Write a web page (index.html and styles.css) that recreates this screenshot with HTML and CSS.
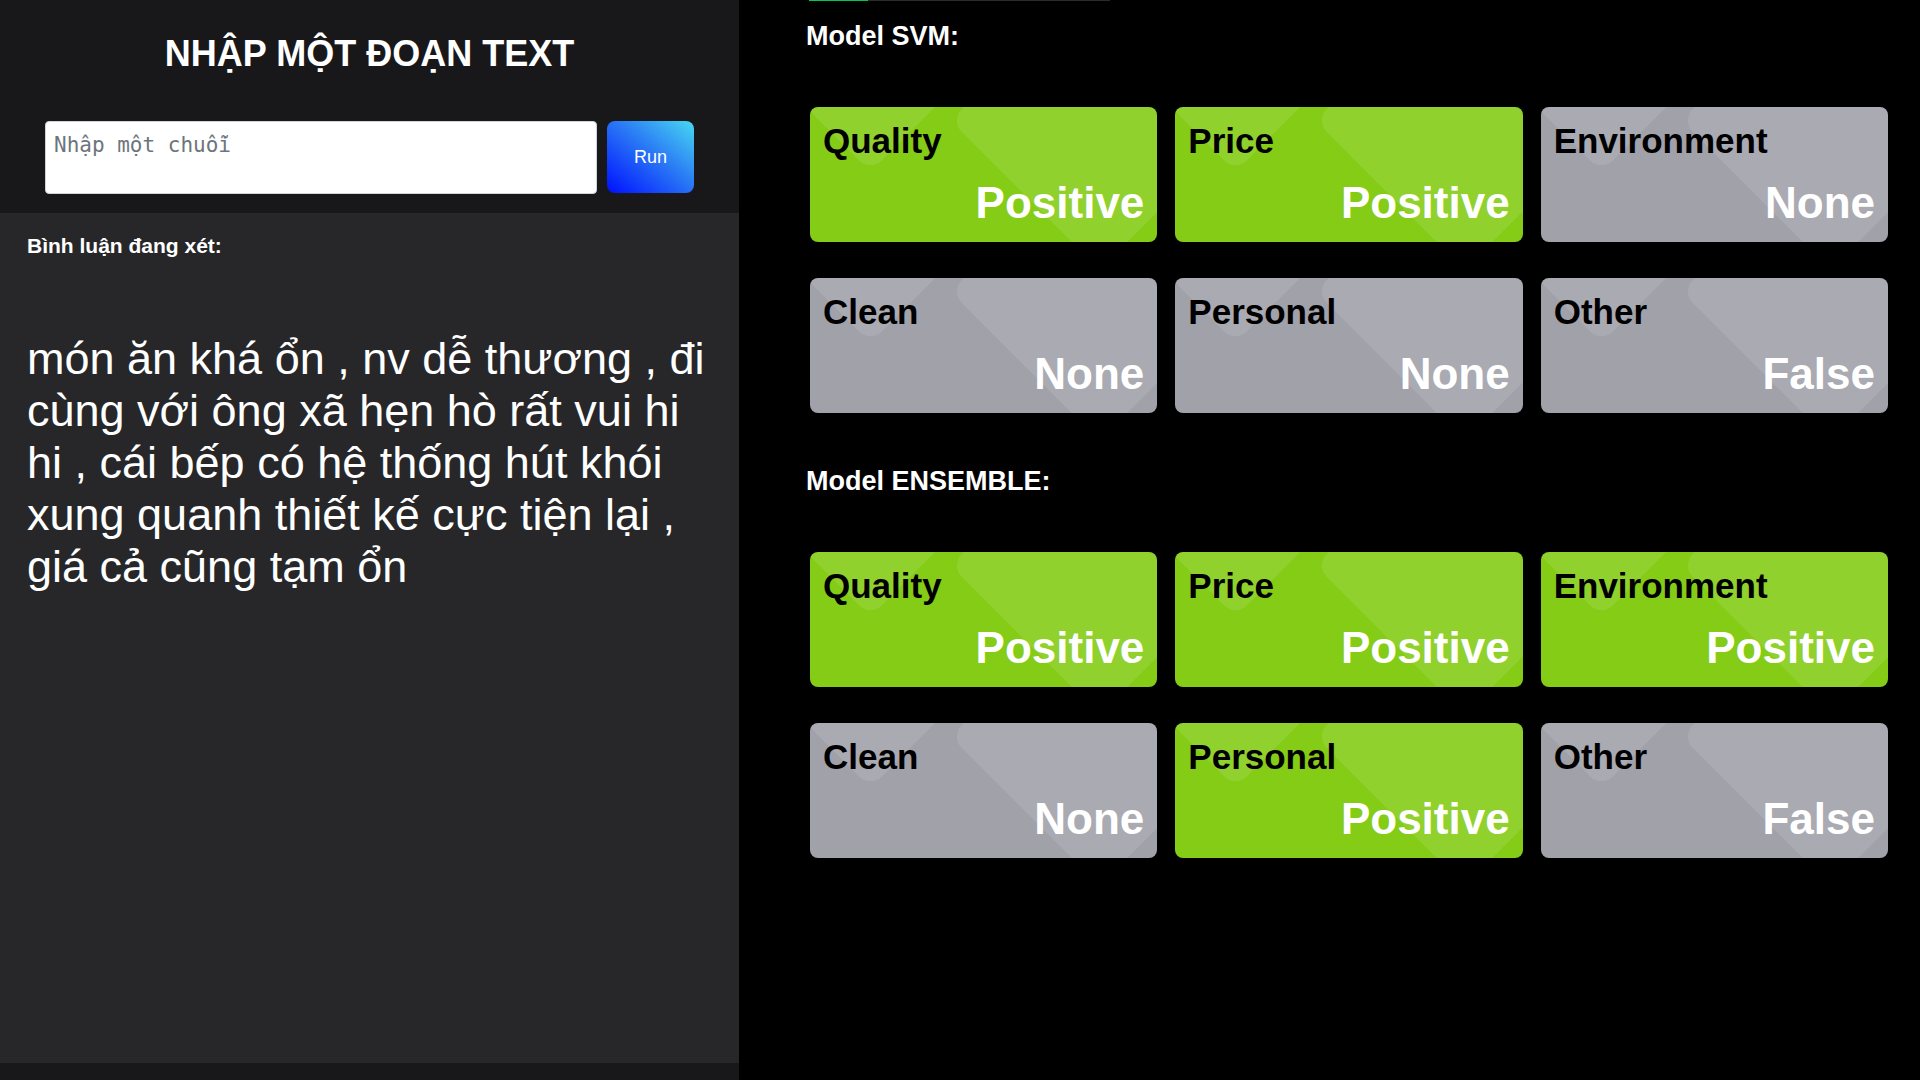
FILE: index.html
```html
<!DOCTYPE html>
<html lang="vi">
<head>
<meta charset="utf-8">
<title>Sentiment</title>
<link rel="stylesheet" href="styles.css">
</head>
<body>
<div class="page">
  <aside class="left">
    <header class="left-head">
      <h1 class="title">NHẬP MỘT ĐOẠN TEXT</h1>
      <form class="form-row">
        <textarea class="text-input" placeholder="Nhập một chuỗi"></textarea>
        <button type="button" class="run-btn">Run</button>
      </form>
    </header>
    <section class="left-body">
      <h5 class="label">Bình luận đang xét:</h5>
      <p class="comment">món ăn khá ổn , nv dễ thương , đi cùng với ông xã hẹn hò rất vui hi hi , cái bếp có hệ thống hút khói xung quanh thiết kế cực tiện lại , giá cả cũng tạm ổn</p>
    </section>
  </aside>
  <main class="right">
    <div class="progress"><div class="progress-fill"></div></div>
    <h3 class="model-title first">Model SVM:</h3>
    <div class="grid">
      <div class="card pos"><span class="aspect">Quality</span><span class="value">Positive</span></div>
      <div class="card pos"><span class="aspect">Price</span><span class="value">Positive</span></div>
      <div class="card none"><span class="aspect">Environment</span><span class="value">None</span></div>
      <div class="card none"><span class="aspect">Clean</span><span class="value">None</span></div>
      <div class="card none"><span class="aspect">Personal</span><span class="value">None</span></div>
      <div class="card none"><span class="aspect">Other</span><span class="value">False</span></div>
    </div>
    <h3 class="model-title">Model ENSEMBLE:</h3>
    <div class="grid">
      <div class="card pos"><span class="aspect">Quality</span><span class="value">Positive</span></div>
      <div class="card pos"><span class="aspect">Price</span><span class="value">Positive</span></div>
      <div class="card pos"><span class="aspect">Environment</span><span class="value">Positive</span></div>
      <div class="card none"><span class="aspect">Clean</span><span class="value">None</span></div>
      <div class="card pos"><span class="aspect">Personal</span><span class="value">Positive</span></div>
      <div class="card none"><span class="aspect">Other</span><span class="value">False</span></div>
    </div>
  </main>
</div>
</body>
</html>
```

FILE: styles.css
```css
* { box-sizing: border-box; }
html, body { margin: 0; padding: 0; }
body {
  background: #000;
  font-family: "Liberation Sans", Arial, sans-serif;
  color: #fff;
  overflow: hidden;
}
.page {
  display: flex;
  height: 1080px;
}
.left {
  width: 739px;
  flex: none;
  background: #18181b;
  display: flex;
  flex-direction: column;
}
.left-head {
  padding: 33px 45px 19px;
}
.title {
  margin: 0;
  font-size: 36px;
  font-weight: 700;
  text-align: center;
  line-height: normal;
}
.form-row {
  display: flex;
  gap: 10px;
  align-items: flex-start;
  margin: 46px 0 0;
}
.text-input {
  flex: 1;
  height: 73px;
  resize: none;
  border: 1px solid #ced4da;
  border-radius: 4px;
  padding: 11px 8px;
  font-family: "DejaVu Sans Mono", monospace;
  font-size: 21px;
  background: #fff;
  color: #212529;
  outline: none;
}
.text-input::placeholder { color: #6c757d; }
.run-btn {
  width: 87px;
  height: 72px;
  border: none;
  border-radius: 8px;
  background: linear-gradient(to top right, #0010ff 0%, #2a7af5 55%, #48d8f2 100%);
  color: #fff;
  font-family: "Liberation Sans", Arial, sans-serif;
  font-size: 18px;
}
.left-body {
  height: 850px;
  background: #27272a;
  padding: 21px 27px 0;
}
.label {
  margin: 0;
  font-size: 21px;
  font-weight: 700;
  line-height: normal;
}
.comment {
  margin: 75px 0 0;
  font-size: 45px;
  line-height: normal;
}
.right {
  flex: 1;
  padding: 0 32px 0 67px;
}
.progress {
  width: 301px;
  height: 1px;
  margin-left: 3px;
  background: #2b2b2b;
}
.progress-fill {
  width: 59px;
  height: 100%;
  background: #00c853;
}
.model-title {
  margin: 53px 0 0;
  font-size: 27px;
  font-weight: 700;
  line-height: normal;
}
.model-title.first { margin-top: 20px; }
.grid {
  display: grid;
  grid-template-columns: repeat(3, 1fr);
  gap: 36px 18px;
  margin: 55px 0 0 4px;
}
.card {
  position: relative;
  overflow: hidden;
  height: 135px;
  border-radius: 8px;
  padding: 14px 13px;
  display: flex;
  flex-direction: column;
  justify-content: space-between;
}
.card.pos { background: #84cc16; }
.card.none { background: #a1a1aa; }
.card::before,
.card::after {
  content: "";
  position: absolute;
  width: 211px;
  height: 211px;
  border-radius: 16px;
  background: rgba(255, 255, 255, 0.1);
  transform: rotate(45deg);
}
.card::before { left: -45px; top: -190px; }
.card::after { left: 184px; top: -92px; }
.aspect, .value {
  position: relative;
  z-index: 1;
  font-weight: 700;
  line-height: normal;
}
.aspect {
  color: #000;
  font-size: 35px;
}
.value {
  color: #fff;
  font-size: 44px;
  text-align: right;
}
```
